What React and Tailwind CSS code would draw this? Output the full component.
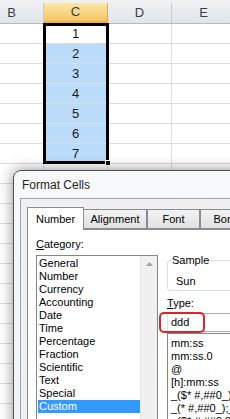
import React from "react";

const categories = [
  "General",
  "Number",
  "Currency",
  "Accounting",
  "Date",
  "Time",
  "Percentage",
  "Fraction",
  "Scientific",
  "Text",
  "Special",
  "Custom",
];

const types = [
  "mm:ss",
  "mm:ss.0",
  "@",
  "[h]:mm:ss",
  "_($* #,##0_);_($* (#,##0)",
  "_(* #,##0_);_(* (#,##0)",
  "_($* #,##0.00_)",
  "_(* #,##0.00_)",
];

const rows = Array.from({ length: 20 }, (_, i) => i + 1);

const Sheet = () => (
  <div className="font-['Liberation_Sans',Arial,sans-serif]">
    <div className="h-[3px] bg-[#eef0f3]" />
    <div className="flex h-[21px] border-b border-[#b6bcc6] text-[13px] text-[#33404f]">
      <div className="-ml-[20px] w-[64px] shrink-0 flex items-center justify-center border-r border-[#c5cad1] bg-gradient-to-b from-[#eef0f3] to-[#e1e5ea]">
        B
      </div>
      <div className="w-[64px] shrink-0 flex items-center justify-center border-r border-[#e3a84a] bg-gradient-to-b from-[#fce7a6] to-[#f4c561] border-b-2 border-b-[#f0b247]">
        C
      </div>
      <div className="w-[64px] shrink-0 flex items-center justify-center border-r border-[#c5cad1] bg-gradient-to-b from-[#eef0f3] to-[#e1e5ea]">
        D
      </div>
      <div className="w-[64px] shrink-0 flex items-center justify-center border-r border-[#c5cad1] bg-gradient-to-b from-[#eef0f3] to-[#e1e5ea]">
        E
      </div>
    </div>
    {rows.map((r) => (
      <div key={r} className="flex h-[20px] border-b border-[#dadcdf] text-[13px] text-[#1a1a1a]">
        <div className="-ml-[20px] w-[64px] shrink-0 border-r border-[#dadcdf]" />
        <div
          className={
            "w-[64px] shrink-0 flex items-center justify-center border-r border-[#dadcdf] " +
            (r >= 2 && r <= 7 ? "bg-[#bcdcfb]" : "bg-white")
          }
        >
          {r <= 7 ? r : ""}
        </div>
        <div className="w-[64px] shrink-0 border-r border-[#dadcdf]" />
        <div className="w-[64px] shrink-0 border-r border-[#dadcdf]" />
      </div>
    ))}
  </div>
);

const Tab = ({ label, active, w }) => (
  <div
    className={
      active
        ? "relative z-10 -mb-px h-[23px] flex items-center justify-center border border-b-0 border-[#898c95] bg-white"
        : "h-[20px] flex items-center justify-center border border-[#898c95] bg-gradient-to-b from-[#f2f2f2] to-[#e1e1e1] -ml-px"
    }
    style={{ width: w }}
  >
    {label}
  </div>
);

const FormatCells = () => (
  <div className="absolute left-[13px] top-[170px] w-[260px] h-[270px] rounded-tl-[8px] border border-[#4a525c] bg-gradient-to-b from-[#f7f9fb] to-[#eef2f6] shadow-[0_0_14px_rgba(0,0,0,0.45)] font-['Liberation_Sans',Arial,sans-serif] text-[#000]">
    <div className="h-[27px] flex items-center pl-[8px] text-[12px] text-[#1e1e1e]">Format Cells</div>
    <div className="ml-[6px] h-full border-l border-t border-[#9ca3ad] bg-[#f0f0f0] pl-[6px] pt-[8px] text-[11px]">
      <div className="flex items-end h-[22px]">
        <Tab label="Number" active w="57px" />
        <Tab label="Alignment" w="64px" />
        <div className="w-[1px]" />
        <Tab label="Font" w="53px" />
        <div className="w-[1px]" />
        <Tab label="Border" w="60px" />
      </div>
      <div className="h-full border-l border-t border-[#898c95] bg-white pl-[8px] pt-[8px]">
        <div className="flex gap-[9px]">
          <div className="w-[122px] shrink-0">
            <div className="h-[13px] leading-[13px]">
              <span className="underline">C</span>ategory:
            </div>
            <div className="mt-[4px] h-[200px] border border-[#828790] flex">
              <div className="flex-1 pl-[1px] pt-[1px]">
                {categories.map((c) => (
                  <div
                    key={c}
                    className={
                      "h-[13px] leading-[13px] pl-[1px] " +
                      (c === "Custom" ? "bg-[#3399ff] text-white" : "")
                    }
                  >
                    {c}
                  </div>
                ))}
              </div>
              <div className="w-[17px] bg-[#f0f0f0] border-l border-[#e6e6e6] flex justify-center pt-[6px]">
                <svg width="7" height="4" viewBox="0 0 7 4">
                  <path d="M3.5 0 L7 4 L0 4 Z" fill="#a3a3a3" />
                </svg>
              </div>
            </div>
          </div>
          <div className="flex-1 min-w-0">
            <fieldset className="mt-[16px] border border-[#d5dfe5] rounded-[3px] pl-[8px] pb-[2px] pt-[8px] m-0">
              <legend className="-ml-[5px] px-[1px] leading-[13px]">Sample</legend>
              <div className="h-[13px] leading-[13px]">Sun</div>
            </fieldset>
            <div className="mt-[6px] h-[13px] leading-[13px]">
              <span className="underline">T</span>ype:
            </div>
            <div className="relative mt-[3px]">
              <div className="h-[19px] border border-[#abadb3] border-l-[#e2e3ea] pl-[3px] flex items-center">ddd</div>
              <div className="absolute -left-[8px] -top-[1px] w-[46px] h-[21px] border-2 border-[#e0202a] rounded-[5px]" />
            </div>
            <div className="mt-[1px] h-[120px] border border-[#828790] pl-[3px] pt-[3px] whitespace-nowrap overflow-hidden">
              {types.map((t) => (
                <div key={t} className="h-[13px] leading-[13px]">
                  {t}
                </div>
              ))}
            </div>
          </div>
        </div>
      </div>
    </div>
  </div>
);

export default function App() {
  return (
    <div className="relative w-[230px] h-[419px] overflow-hidden bg-white">
      <Sheet />
      <div className="absolute left-[43px] top-[23px] w-[66px] h-[141px] border-[3px] border-black" />
      <div className="absolute left-[105px] top-[160px] w-[6px] h-[6px] bg-black border border-white" />
      <FormatCells />
    </div>
  );
}
